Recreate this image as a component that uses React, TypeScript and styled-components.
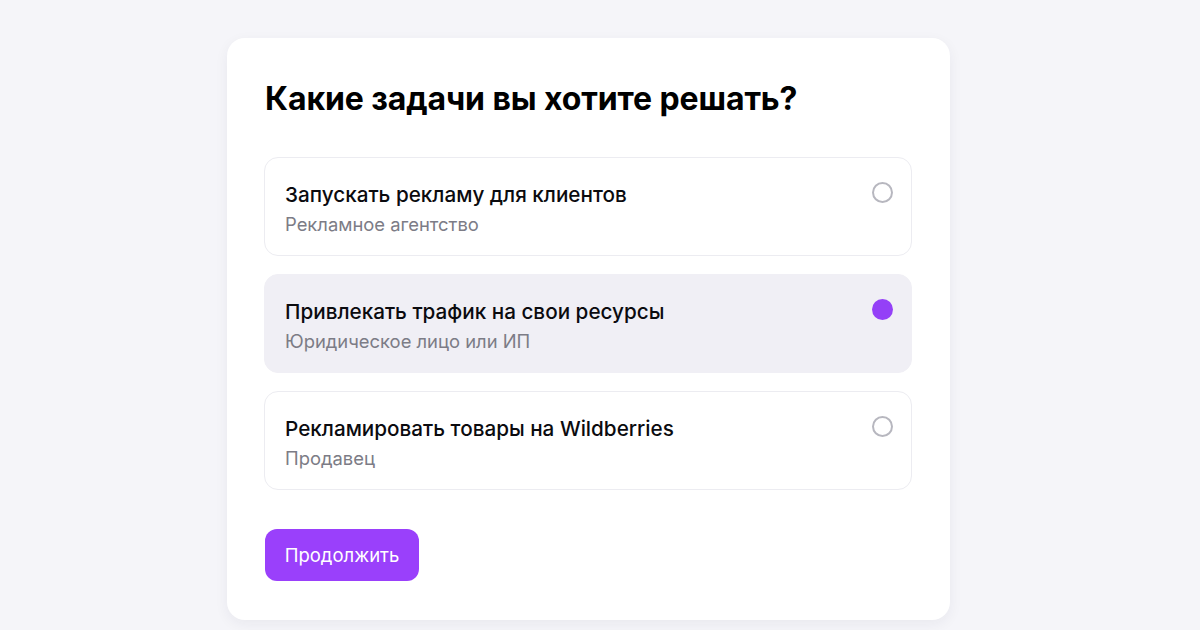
import { useState } from "react";
import { styled, createGlobalStyle } from "styled-components";

const Global = createGlobalStyle`
  html, body {
    margin: 0;
    padding: 0;
    background: #f5f5f9;
    font-family: Inter, "Noto Sans", sans-serif;
  }
`;

const Page = styled.div`
  width: 1200px;
  height: 630px;
  padding: 38px 0 0 227px;
  box-sizing: border-box;
  overflow: hidden;
`;

const Card = styled.div`
  width: 723px;
  box-sizing: border-box;
  background: #ffffff;
  border-radius: 18px;
  box-shadow: 0 4px 14px rgba(30, 30, 60, 0.06);
  padding: 40px 38px 39px 38px;
`;

const Heading = styled.h1`
  margin: 0 0 37px 0;
  font-size: 32px;
  line-height: 42px;
  font-weight: 700;
  color: #000000;
  letter-spacing: -0.1px;
`;

const List = styled.div`
  display: flex;
  flex-direction: column;
  gap: 18px;
  margin-left: -1px;
  width: 648px;
`;

const Option = styled.div<{ $active: boolean }>`
  display: flex;
  align-items: flex-start;
  justify-content: space-between;
  height: 99px;
  box-sizing: border-box;
  padding: 23px 18px 0 20px;
  border-radius: 14px;
  border: 1px solid ${(p) => (p.$active ? "#f0eff5" : "#ececf1")};
  background: ${(p) => (p.$active ? "#f0eff5" : "#ffffff")};
  cursor: pointer;
`;

const Texts = styled.div`
  display: flex;
  flex-direction: column;
  gap: 4px;
`;

const Title = styled.div`
  font-size: 20.7px;
  line-height: 27px;
  font-weight: 500;
  color: #0b0b0f;
`;

const Subtitle = styled.div`
  font-size: 18.4px;
  line-height: 24px;
  color: #7c7c86;
`;

const Radio = styled.div<{ $active: boolean }>`
  width: 21px;
  height: 21px;
  box-sizing: border-box;
  border-radius: 50%;
  margin-top: 1px;
  border: ${(p) => (p.$active ? "none" : "2px solid #b7b7bf")};
  background: ${(p) => (p.$active ? "#9440f7" : "transparent")};
`;

const Button = styled.button`
  margin-top: 39px;
  width: 154px;
  height: 52px;
  border: 0;
  border-radius: 12px;
  background: #9a40fb;
  color: #ffffff;
  font-family: inherit;
  font-size: 18.5px;
  font-weight: 400;
  cursor: pointer;
`;

const options = [
  { title: "Запускать рекламу для клиентов", sub: "Рекламное агентство" },
  { title: "Привлекать трафик на свои ресурсы", sub: "Юридическое лицо или ИП" },
  { title: "Рекламировать товары на Wildberries", sub: "Продавец" },
];

export default function App() {
  const [selected, setSelected] = useState(1);
  return (
    <>
      <Global />
      <Page>
        <Card>
          <Heading>Какие задачи вы хотите решать?</Heading>
          <List>
            {options.map((o, i) => (
              <Option key={o.title} $active={selected === i} onClick={() => setSelected(i)}>
                <Texts>
                  <Title>{o.title}</Title>
                  <Subtitle>{o.sub}</Subtitle>
                </Texts>
                <Radio $active={selected === i} />
              </Option>
            ))}
          </List>
          <Button>Продолжить</Button>
        </Card>
      </Page>
    </>
  );
}
